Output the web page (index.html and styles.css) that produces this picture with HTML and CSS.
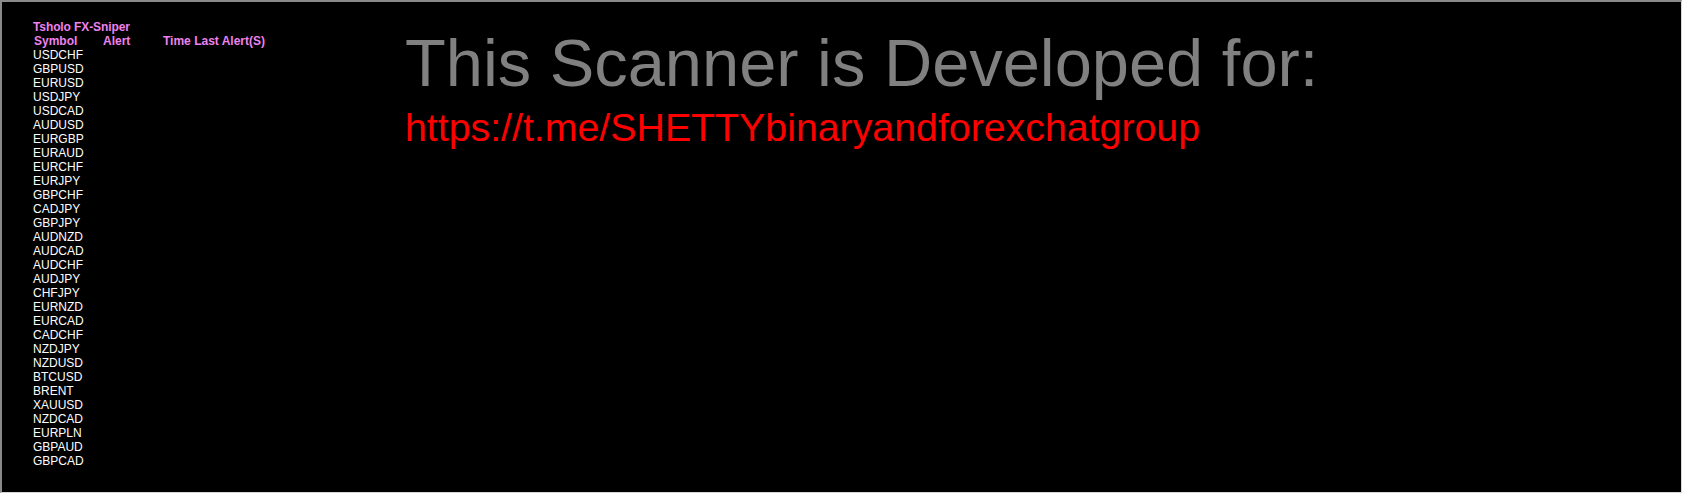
FILE: index.html
```html
<!DOCTYPE html>
<html>
<head>
<meta charset="utf-8">
<link rel="stylesheet" href="styles.css">
</head>
<body>
<div class="frame">
  <div class="scanner">
    <div class="title">Tsholo FX-Sniper</div>
    <div class="grid">
      <div class="head">Symbol</div><div class="head">Alert</div><div class="head">Time Last Alert(S)</div>
      <div class="sym">USDCHF</div><div></div><div></div>
      <div class="sym">GBPUSD</div><div></div><div></div>
      <div class="sym">EURUSD</div><div></div><div></div>
      <div class="sym">USDJPY</div><div></div><div></div>
      <div class="sym">USDCAD</div><div></div><div></div>
      <div class="sym">AUDUSD</div><div></div><div></div>
      <div class="sym">EURGBP</div><div></div><div></div>
      <div class="sym">EURAUD</div><div></div><div></div>
      <div class="sym">EURCHF</div><div></div><div></div>
      <div class="sym">EURJPY</div><div></div><div></div>
      <div class="sym">GBPCHF</div><div></div><div></div>
      <div class="sym">CADJPY</div><div></div><div></div>
      <div class="sym">GBPJPY</div><div></div><div></div>
      <div class="sym">AUDNZD</div><div></div><div></div>
      <div class="sym">AUDCAD</div><div></div><div></div>
      <div class="sym">AUDCHF</div><div></div><div></div>
      <div class="sym">AUDJPY</div><div></div><div></div>
      <div class="sym">CHFJPY</div><div></div><div></div>
      <div class="sym">EURNZD</div><div></div><div></div>
      <div class="sym">EURCAD</div><div></div><div></div>
      <div class="sym">CADCHF</div><div></div><div></div>
      <div class="sym">NZDJPY</div><div></div><div></div>
      <div class="sym">NZDUSD</div><div></div><div></div>
      <div class="sym">BTCUSD</div><div></div><div></div>
      <div class="sym">BRENT</div><div></div><div></div>
      <div class="sym">XAUUSD</div><div></div><div></div>
      <div class="sym">NZDCAD</div><div></div><div></div>
      <div class="sym">EURPLN</div><div></div><div></div>
      <div class="sym">GBPAUD</div><div></div><div></div>
      <div class="sym">GBPCAD</div><div></div><div></div>
    </div>
  </div>
  <div class="banner">
    <div class="dev">This Scanner is Developed for:</div>
    <div class="link">https://t.me/SHETTYbinaryandforexchatgroup</div>
  </div>
</div>
</body>
</html>
```

FILE: styles.css
```css
html, body {
  margin: 0;
  padding: 0;
  background: #000;
}
.frame {
  box-sizing: border-box;
  width: 1682px;
  height: 493px;
  background: #000;
  border-top: 2px solid #8a8a8a;
  border-left: 2px solid #8a8a8a;
  border-right: 1px solid #d8d8d8;
  border-bottom: 1px solid #d8d8d8;
  display: flex;
  font-family: "Liberation Sans", Arial, sans-serif;
  overflow: hidden;
}
.scanner {
  width: 403px;
  flex: none;
  padding: 18px 0 0 31px;
  box-sizing: border-box;
  font-size: 12px;
  line-height: 14px;
}
.title {
  color: #ee82ee;
  font-weight: bold;
  letter-spacing: -0.1px;
}
.grid {
  display: grid;
  grid-template-columns: 69px 60px auto;
}
.head {
  color: #ee82ee;
  font-weight: bold;
  padding-left: 1px;
}
.sym {
  color: #fff;
}
.banner {
  padding-top: 28px;
  display: flex;
  flex-direction: column;
  gap: 11px;
}
.dev {
  color: #808080;
  font-size: 66.8px;
  line-height: 67px;
}
.link {
  color: #ff0000;
  font-size: 39.3px;
  line-height: 39px;
}
```
